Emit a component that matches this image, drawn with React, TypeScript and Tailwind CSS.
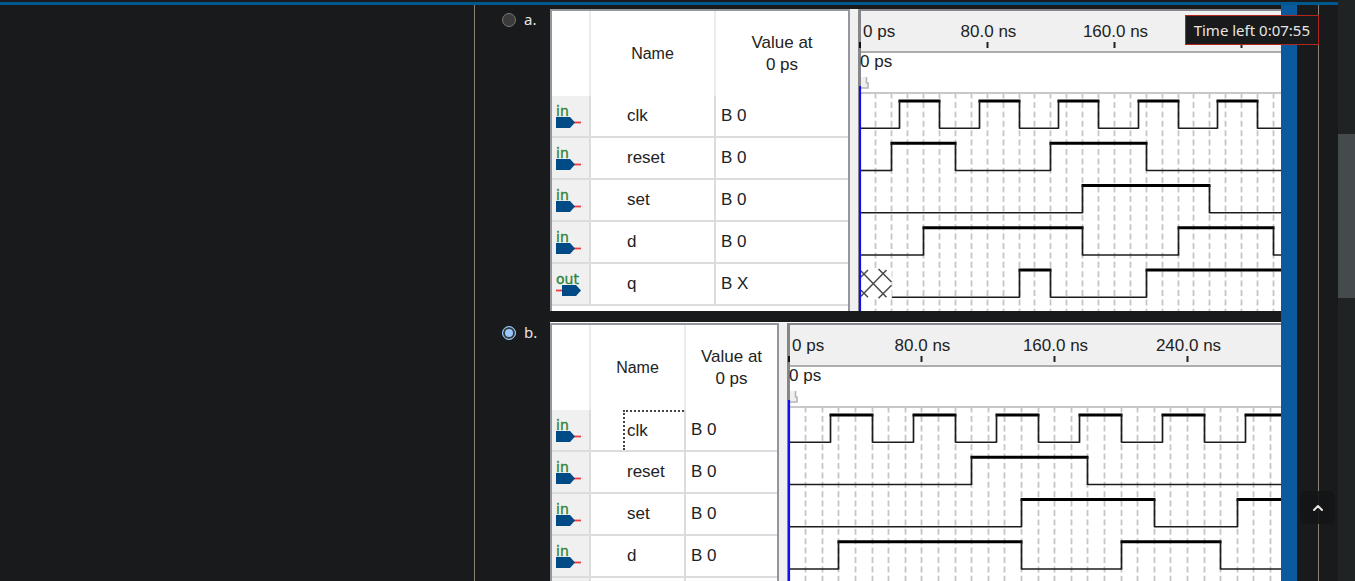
import { ChevronUp } from "lucide-react";

type Signal = {
  name: string;
  value: string;
  output?: boolean;
  /** Times in ns at which the level toggles, starting from low. */
  edges: number[];
  /** Time in ns until which the level is unknown. */
  unknownUntil?: number;
};

type Waveform = {
  pxPerNs: number;
  /** Times in ns that carry a written label on the ruler. */
  labels: number[];
  selected?: string;
  signals: Signal[];
};

const clock = Array.from({ length: 48 }, (_, i) => 25 + i * 25);

const waveA: Waveform = {
  pxPerNs: 1.59,
  labels: [80, 160],
  signals: [
    { name: "clk", value: "B 0", edges: clock },
    { name: "reset", value: "B 0", edges: [20, 60, 120, 180] },
    { name: "set", value: "B 0", edges: [140, 220] },
    { name: "d", value: "B 0", edges: [40, 140, 200, 260] },
    { name: "q", value: "B X", output: true, edges: [100, 120, 180], unknownUntil: 20 },
  ],
};

const waveB: Waveform = {
  pxPerNs: 1.66,
  labels: [80, 160, 240],
  selected: "clk",
  signals: [
    { name: "clk", value: "B 0", edges: clock },
    { name: "reset", value: "B 0", edges: [110, 180] },
    { name: "set", value: "B 0", edges: [140, 220, 270] },
    { name: "d", value: "B 0", edges: [30, 140, 200, 260] },
    { name: "q", value: "B X", output: true, edges: [100, 120, 180], unknownUntil: 20 },
  ],
};

const END = 1200;
const ORIGIN = 1;
const FIRST_HIGH = 90;
const ROW_PITCH = 42.25;
const SWING = 27.25;

function PinIcon({ output }: { output?: boolean }) {
  return (
    <svg width="28" height="26" className="ml-1 block" aria-hidden="true">
      <text x="0" y="12.5" fontFamily="DejaVu Sans, sans-serif" fontSize="14" fill="#2f8238" stroke="#2f8238" strokeWidth="0.3">
        {output ? "out" : "in"}
      </text>
      {output ? (
        <>
          <path d="M0 19.500H7" stroke="#f03a3e" strokeWidth="1.8" />
          <path d="M6 14H20L25 19.500L20 25H6Z" fill="#004a86" />
        </>
      ) : (
        <>
          <path d="M18 19.500H25" stroke="#f03a3e" strokeWidth="1.8" />
          <path d="M0 14H14L19 19.500L14 25H0Z" fill="#004a86" />
        </>
      )}
    </svg>
  );
}

function Trace({ signal, row, pxPerNs }: { signal: Signal; row: number; pxPerNs: number }) {
  const high = FIRST_HIGH + row * ROW_PITCH;
  const low = high + SWING;
  const x = (t: number) => Math.floor(ORIGIN + t * pxPerNs) + 0.5;
  const start = signal.unknownUntil ?? 0;
  const stops = [start, ...signal.edges, END];
  const u = x(start);
  return (
    <g>
      {stops.slice(0, -1).map((t, i) => {
        const isHigh = i % 2 === 1;
        return isHigh ? (
          <path key={t} d={`M${x(t) - 1} ${high}H${x(stops[i + 1]) + 1}`} stroke="#000" strokeWidth="3" />
        ) : (
          <path key={t} d={`M${x(t)} ${low}H${x(stops[i + 1])}`} stroke="#1c1c1c" strokeWidth="1.6" />
        );
      })}
      {signal.edges.map((t) => (
        <path key={t} d={`M${x(t)} ${high}V${low + 0.5}`} stroke="#1c1c1c" strokeWidth="1.7" />
      ))}
      {signal.unknownUntil && (
        <>
          <rect x={ORIGIN + 1} y={high - 1} width={u - ORIGIN - 1} height={SWING + 2} fill="#fff" />
          <path
            d={`M2 ${high + 1}L${u - 5} ${low}M2 ${high + 7}L9 ${high}M2 ${low - 1}L${u - 5} ${high}M2 ${low - 7}L9 ${low}M${u - 13} ${high - 1}L${u} ${high + 12}M${u - 13} ${low + 1}L${u} ${low - 12}`}
            fill="none"
            stroke="#4a4a4a"
            strokeWidth="1.5"
          />
        </>
      )}
    </g>
  );
}

function Chart({ wave }: { wave: Waveform }) {
  const at = (t: number) => Math.floor(ORIGIN + t * wave.pxPerNs) + 0.5;
  const grid = Array.from({ length: 119 }, (_, i) => (i + 1) * 10);
  const ticks = Array.from({ length: 14 }, (_, i) => (i + 1) * 80);
  return (
    <svg className="block h-[300px] w-full" fontFamily="Liberation Sans, Arial, sans-serif" fontSize="17" fill="#222">
      <rect width="100%" height="300" fill="#fff" />
      <rect width="100%" height="41" fill="#f0f0f0" />
      <path d="M0 41H2000" stroke="#adadad" strokeWidth="2" />
      <path d="M0 82H2000" stroke="#c8c8c8" strokeWidth="2" />
      {grid.map((t) => (
        <path key={t} d={`M${at(t)} 83V300`} stroke="#c6c6c6" strokeWidth="1.8" strokeDasharray="6 3.4" strokeDashoffset="1.4" />
      ))}
      {wave.signals.map((s, i) => (
        <Trace key={s.name} signal={s} row={i} pxPerNs={wave.pxPerNs} />
      ))}
      <path d="M1 0V76" stroke="#85858c" strokeWidth="2" />
      <path d="M1 31V37" stroke="#111" strokeWidth="2" />
      <text x="4" y="26">0 ps</text>
      {ticks.map((t) => (
        <path key={t} d={`M${at(t)} 31V37`} stroke="#222" strokeWidth="2" />
      ))}
      {wave.labels.map((t) => (
        <text key={t} x={at(t) + 1} y="26" textAnchor="middle">{`${t}.0 ns`}</text>
      ))}
      <text x="1" y="56">0 ps</text>
      <path d="M2 66H7V72H9V77H2Z" fill="#f0f0f0" />
      <path d="M7.500 66V72H9V77H2" fill="none" stroke="#b5b5b5" strokeWidth="1.6" />
      <path d="M1 75V300" stroke="#1010ee" strokeWidth="2.2" />
    </svg>
  );
}

function WaveformView({ wave, nameWidth, valueWidth }: { wave: Waveform; nameWidth: string; valueWidth: string }) {
  return (
    <div className="flex h-full items-stretch bg-[#f0f0f0] font-['Liberation_Sans',Arial,sans-serif] text-[17px] leading-[22px] text-[#222]">
      <div className="shrink-0 border-x-2 border-t-2 border-[#93969e] bg-white">
        <table className="table-fixed border-separate border-spacing-0">
          <colgroup>
            <col className="w-[39px]" />
            <col className={nameWidth} />
            <col className={valueWidth} />
          </colgroup>
          <thead>
            <tr className="h-[85px]">
              <th className="border-r-2 border-[#ebebeb] p-0" aria-label="Direction" />
              <th className="border-r-2 border-[#ebebeb] p-0 text-base font-normal">Name</th>
              <th className="p-0 font-normal">
                Value at
                <br />0 ps
              </th>
            </tr>
          </thead>
          <tbody>
            {wave.signals.map((s) => (
              <tr key={s.name} className="h-[42px]">
                <td className="border-r-2 border-b-2 border-[#dcdcdc] bg-[#f0f0f0] p-0">
                  <PinIcon output={s.output} />
                </td>
                <td className="border-r-2 border-b-2 border-[#dcdcdc] p-0">
                  {wave.selected === s.name ? (
                    <div className="ml-8 flex h-10 items-center border-t-2 border-l-2 border-dotted border-[#444] pl-0.5">{s.name}</div>
                  ) : (
                    <div className="pl-9">{s.name}</div>
                  )}
                </td>
                <td className="border-b-2 border-[#dcdcdc] p-0 pl-[5px]">{s.value}</td>
              </tr>
            ))}
          </tbody>
        </table>
      </div>
      <div className="w-2 shrink-0" />
      <div className="min-w-0 flex-1 border-t-2 border-l border-[#85858c]">
        <Chart wave={wave} />
      </div>
    </div>
  );
}

const radioClass =
  "mt-1 size-3.5 shrink-0 appearance-none rounded-full border border-[#777] bg-[#3b3b3b] checked:border-[#99c8ff] checked:bg-[#99c8ff] checked:shadow-[inset_0_0_0_2px_#35393b]";

export default function App() {
  return (
    <div className="relative flex h-screen overflow-hidden bg-[#181a1b] font-['Noto_Sans',sans-serif] text-[15px] text-[#e8e6e3]">
      <div className="flex min-w-0 flex-1 flex-col">
        <header className="mt-0.5 h-[3px] shrink-0 bg-[#005891]" />
        <div className="flex min-h-0 flex-1">
          <aside className="w-[474px] shrink-0" />
          <main className="mr-[19px] flex min-w-0 flex-1 border-x border-[#8c8273]">
            <form className="flex min-w-0 flex-1 flex-col gap-[11px] overflow-hidden pt-1 pl-[27px]">
              <div className="flex shrink-0 items-start">
                <input id="answer-a" type="radio" name="answer" className={radioClass} />
                <label htmlFor="answer-a" className="ml-2 w-[26px] shrink-0 leading-5">a.</label>
                <div className="h-[302px] min-w-0 flex-1 overflow-hidden">
                  <WaveformView wave={waveA} nameWidth="w-[125px]" valueWidth="w-[132px]" />
                </div>
              </div>
              <div className="flex shrink-0 items-start">
                <input id="answer-b" type="radio" name="answer" defaultChecked className={radioClass} />
                <label htmlFor="answer-b" className="ml-2 w-[26px] shrink-0 leading-5">b.</label>
                <div className="h-[303px] min-w-0 flex-1 overflow-hidden border-t border-white">
                  <WaveformView wave={waveB} nameWidth="w-[95px]" valueWidth="w-[91px]" />
                </div>
              </div>
            </form>
            <div className="mr-[21px] w-4 shrink-0 bg-[#0c5a9e]" />
          </main>
        </div>
      </div>
      <div className="w-[17px] shrink-0 bg-[#1f2324] pt-[134px]">
        <div className="h-[164px] bg-[#454a4d]" />
      </div>
      <div className="absolute top-[15px] right-9 border border-[#b0261c] bg-[#181a1b] px-2 py-0.5 leading-6">
        Time left 0:07:55
      </div>
      <button
        type="button"
        aria-label="Back to top"
        className="absolute right-5 bottom-[57px] flex h-[33px] w-[35px] items-center justify-center rounded-md bg-[#131516]/90"
      >
        <ChevronUp className="size-4" strokeWidth={3} />
      </button>
    </div>
  );
}
